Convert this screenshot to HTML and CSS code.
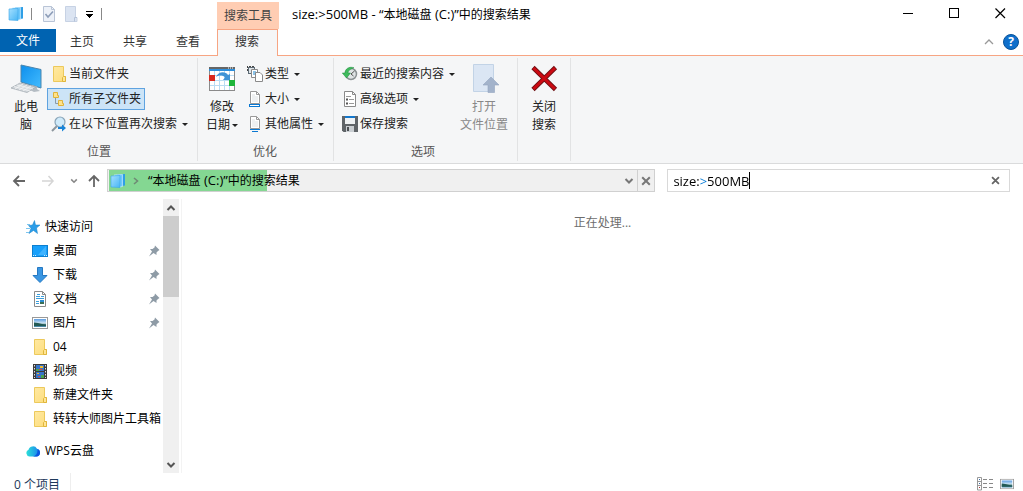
FILE: index.html
```
<!DOCTYPE html>
<html lang="zh-CN">
<head>
  <meta charset="UTF-8" />
  <title>size:&gt;500MB - “本地磁盘 (C:)”中的搜索结果</title>
  <link rel="stylesheet" href="styles.css">
</head>
<body>
<!-- shared icons -->
<svg class="defs" aria-hidden="true">
  <defs>
    <linearGradient id="gFolder" x1="0" y1="0" x2="1" y2="1"><stop offset="0" stop-color="#ffe9a2"/><stop offset="1" stop-color="#fddd7c"/></linearGradient>
    <linearGradient id="gScreen" x1="0" y1="0" x2="1" y2="1"><stop offset="0" stop-color="#0d8eec"/><stop offset="1" stop-color="#43bcff"/></linearGradient>
    <linearGradient id="gStack" x1="0" y1="0" x2="1" y2="1"><stop offset="0" stop-color="#a5e0ff"/><stop offset="1" stop-color="#47b5f5"/></linearGradient>
    <linearGradient id="gCloud" x1="0" y1="0" x2="1" y2="0"><stop offset="0" stop-color="#2be0d8"/><stop offset="1" stop-color="#1a7df0"/></linearGradient>
    <linearGradient id="gPhoto" x1="0" y1="0" x2="0" y2="1"><stop offset="0" stop-color="#5b9be0"/><stop offset=".55" stop-color="#d5eaf5"/><stop offset=".6" stop-color="#3c6f6c"/><stop offset="1" stop-color="#4d8fb5"/></linearGradient>
    <symbol id="stack" viewBox="0 0 16 16">
      <path d="M7 1.500 L15 1 V12.500 L12 13 Z" fill="#2f9fe6"/>
      <path d="M4 2 L12.500 1.500 V13.500 L10 14 Z" fill="#6ec8fb" stroke="#d8f1ff" stroke-width=".6"/>
      <path d="M1 3 L10 2.500 V14.500 L1 14 Z" fill="url(#gStack)" stroke="#3ba6ea" stroke-width=".6"/>
    </symbol>
    <symbol id="folder" viewBox="0 0 16 16">
      <path d="M2.500 .5 H12.500 V10.500 H14.500 V15.500 H2.500 Z" fill="url(#gFolder)" stroke="#ecc95c"/>
      <path d="M11.500 15.500 V11.500 L12.500 10.500 H14.500 V15.500 Z" fill="#ffe595" stroke="#e0b63c"/>
    </symbol>
    <symbol id="page" viewBox="0 0 16 16">
      <path d="M3.500 .5 H9.500 L12.500 3.500 V12.500 H3.500 Z" fill="#fff" stroke="#999"/>
      <path d="M9.500 .5 V3.500 H12.500" fill="none" stroke="#999"/>
      <path d="M5 3 H8 V5 H11 V11 H5 Z" fill="#eef0f1"/>
    </symbol>
    <symbol id="pin" viewBox="0 0 12 12">
      <path d="M7 .5 L11.500 5 L10 6 L8.500 7.500 L8.500 10 L5.500 8 L1 11.500 L4 6.500 L2 4 L4.500 4 L6.500 2.500 Z" fill="#8e9ba6"/>
    </symbol>
    <symbol id="chev" viewBox="0 0 10 10">
      <path d="M1.500 3 L5 6.500 L8.500 3" fill="none" stroke="currentColor" stroke-width="2"/>
    </symbol>
    <symbol id="cross" viewBox="0 0 10 10">
      <path d="M1.200 1.200 L8.800 8.800 M8.800 1.200 L1.200 8.800" fill="none" stroke="currentColor" stroke-width="2"/>
    </symbol>
    <symbol id="photo" viewBox="0 0 16 12">
      <rect x=".5" y=".5" width="15" height="11" fill="#fff" stroke="#999"/>
      <rect x="2" y="2" width="12" height="8" fill="url(#gPhoto)"/>
      <path d="M2 5.500 L6 6 L14 8 V9 H2 Z" fill="#235a55"/>
    </symbol>
  </defs>
</svg>

<header class="titlebar">
  <div class="quick">
    <svg class="i16"><use href="#stack"/></svg>
    <span class="bar"></span>
    <button type="button" aria-label="属性"><svg class="i16" viewBox="0 0 16 16"><path d="M2.500 .5 H10.500 L13.500 3.500 V15.500 H2.500 Z" fill="#edf1f8" stroke="#b9c4d6"/><path d="M10.500 .5 V3.500 H13.500" fill="none" stroke="#b9c4d6"/><path d="M4.500 8 L7 11 L12 5.500" fill="none" stroke="#8d9db8" stroke-width="1.600"/></svg></button>
    <button type="button" aria-label="新建文件夹"><svg class="i16" viewBox="0 0 16 16"><path d="M2.500 .5 H12.500 V11.500 H14 V15.500 H2.500 Z" fill="#dbe4f2" stroke="#c7d2e4"/><path d="M11.500 15.500 V11.500 H14" fill="none" stroke="#b4c2d8"/></svg></button>
    <button type="button" aria-label="自定义快速访问工具栏"><svg class="more" viewBox="0 0 8 8"><path d="M1 1.500 H8 M1 4.500 H8 M2 5.500 H7 M3 6.500 H6 M4 7.500 H5" stroke="#000"/></svg></button>
    <span class="bar last"></span>
  </div>
  <div class="context">搜索工具</div>
  <h1><span class="latin">size:&gt;500MB - “</span>本地磁盘<span class="latin"> (C:)”</span>中的搜索结果</h1>
  <div class="controls">
    <button type="button" aria-label="最小化"><svg viewBox="0 0 11 11"><path d="M0 5.500 H10" stroke="#000"/></svg></button>
    <button type="button" aria-label="最大化"><svg viewBox="0 0 11 11"><rect x=".5" y=".5" width="9" height="9" fill="none" stroke="#000"/></svg></button>
    <button type="button" aria-label="关闭"><svg viewBox="0 0 11 11"><path d="M.5 .5 L10 10 M10 .5 L.5 10" stroke="#000" stroke-width="1.200"/></svg></button>
  </div>
</header>

<nav class="tabs">
  <button type="button" class="file">文件</button>
  <button type="button">主页</button>
  <button type="button">共享</button>
  <button type="button">查看</button>
  <button type="button" class="active">搜索</button>
  <div class="tabs-right">
    <button type="button" aria-label="最小化功能区"><svg class="i10" viewBox="0 0 10 10"><path d="M1 7 L5 3 L9 7" fill="none" stroke="#999" stroke-width="1.300"/></svg></button>
    <button type="button" class="help" aria-label="帮助">?</button>
  </div>
</nav>

<section class="ribbon">
  <div class="group place">
    <div class="tools">
      <button type="button" class="large">
        <svg class="i32" viewBox="0 0 32 32">
          <path d="M11 1 L31 5.500 V24 L11 18 Z" fill="url(#gScreen)" stroke="#4b85ad"/>
          <path d="M22 21 L27 22.500 V25 L30 27 L24 28 L19 25.500 Z" fill="#b4bcc3"/>
          <path d="M10 19 L26 23 L17 28.500 L1 24 Z" fill="#d3d8dc" stroke="#9da6ae" stroke-width=".7"/>
          <path d="M7 21 L23 25 M4 22.500 L20 27 M13 20 L5 25 M17 21 L9 26 M21 22 L13 27" stroke="#f2f4f5" stroke-width=".8"/>
        </svg>
        <span>此电<br>脑</span>
      </button>
      <div class="col">
        <button type="button" class="small"><svg class="i16"><use href="#folder"/></svg>当前文件夹</button>
        <button type="button" class="small on"><svg class="i16" viewBox="0 0 16 16"><path d="M4.500 7 V12.500 H8" fill="none" stroke="#8a9aa8"/><path d="M2.500 1.500 H6.500 V4.500 H7.500 V6.500 H2.500 Z" fill="#ffe28a" stroke="#dfb33a"/><path d="M7.500 9.500 H11.500 V12.500 H12.500 V14.500 H7.500 Z" fill="#ffe28a" stroke="#dfb33a"/></svg>所有子文件夹</button>
        <button type="button" class="small"><svg class="i16" viewBox="0 0 16 16"><path d="M1 15 L6 10" stroke="#8c969e" stroke-width="2"/><circle cx="9" cy="6" r="5" fill="#cfeafa" stroke="#8aa5b8" stroke-width="1.200"/><path d="M7 11 H11 V8.500 L15 12 L11 15.500 V13 H7 Z" fill="#1683d8"/></svg>在以下位置再次搜索<i class="arrow"></i></button>
      </div>
    </div>
    <div class="caption">位置</div>
  </div>

  <div class="group">
    <div class="tools">
      <button type="button" class="large">
        <svg class="i32" viewBox="0 0 32 32">
          <rect x="3.500" y="3.500" width="25" height="23" fill="#fff" stroke="#8a8a8a"/>
          <rect x="3" y="3" width="26" height="2" fill="#666"/>
          <path d="M22 4 H28" stroke="#fff" stroke-dasharray="1 1"/>
          <rect x="3" y="5" width="26" height="2" fill="#2d8fdc"/>
          <path d="M4 11.500 H28 M4 16.500 H28 M4 21.500 H28 M8.500 7 V26 M13.500 7 V26 M18.500 7 V26 M23.500 7 V26" stroke="#b9dcf3"/>
          <path d="M10 13 C12 7 20 7 22 11 L24 10 V16 H17 L19 13.500 C17 11 13 11 10 13 Z" fill="#3f93d6"/>
          <rect x="3" y="11" width="6" height="6" fill="#d8281d"/>
          <rect x="23" y="16" width="6" height="6" fill="#1fb53a"/>
        </svg>
        <span>修改<br>日期<i class="arrow"></i></span>
      </button>
      <div class="col">
        <button type="button" class="small"><svg class="i16" viewBox="0 0 16 16"><path d="M.5 0 V6 M2 .5 H8" stroke="#444" stroke-dasharray="2 1"/><rect x="1.500" y="1.500" width="6" height="6" fill="#dfe5e9" stroke="#5d6b75"/><path d="M4.500 3.500 H10.500 V11.500 H4.500 Z" fill="#fff" stroke="#8a8a8a"/><rect x="6" y="5" width="3" height="4" fill="#8cc3e8"/><path d="M8.500 6.500 H13 L15.500 9 V15.500 H8.500 Z" fill="#fff" stroke="#8a8a8a"/></svg>类型<i class="arrow"></i></button>
        <button type="button" class="small"><svg class="i16" viewBox="0 0 16 16"><use href="#page" width="16" height="16"/><rect x="2.500" y="13.500" width="10" height="2" fill="#fff" stroke="#0a78d2"/></svg>大小<i class="arrow"></i></button>
        <button type="button" class="small"><svg class="i16" viewBox="0 0 16 16"><use href="#page" width="16" height="16"/><path d="M3 13.500 H13 M5 15.500 H11" stroke="#0a78d2"/></svg>其他属性<i class="arrow"></i></button>
      </div>
    </div>
    <div class="caption">优化</div>
  </div>

  <div class="group options">
    <div class="tools">
      <div class="col">
        <button type="button" class="small"><svg class="i16" viewBox="0 0 16 16"><circle cx="9" cy="8" r="5.500" fill="#dfe4e5" stroke="#8b9294" stroke-width="1.500"/><path d="M9 8 L12.500 5 M9 8 L11.500 10" stroke="#555"/><path d="M12 1.800 C7 0 3 3 3 7 H.3 L4.500 12 L8.500 7 H6 C6 4.500 8.500 3 12 1.800 Z" fill="#3fba5c" stroke="#198c3b" stroke-width=".5"/></svg>最近的搜索内容<i class="arrow"></i></button>
        <button type="button" class="small"><svg class="i16" viewBox="0 0 16 16"><path d="M2.500 .5 H10.500 L13.500 3.500 V15.500 H2.500 Z" fill="#fff" stroke="#8a8a8a"/><path d="M10.500 .5 V3.500 H13.500" fill="none" stroke="#8a8a8a"/><path d="M4 5.500 H9 M7 8.500 H12 M7 12.500 H12" stroke="#999"/><path d="M4 8.500 H6 M4 12.500 H6" stroke="#555" stroke-width="2"/></svg>高级选项<i class="arrow"></i></button>
        <button type="button" class="small"><svg class="i16" viewBox="0 0 16 16"><path d="M0 0 H16 V16 H1.500 L0 14.500 Z" fill="#5f6468"/><rect x="3" y="0" width="10" height="8" fill="#eef1f3"/><rect x="3" y="0" width="10" height="2" fill="#1377cc"/><rect x="4" y="10" width="8" height="6" fill="#c9ced2"/><rect x="5" y="11" width="2" height="4" fill="#4a4e52"/></svg>保存搜索</button>
      </div>
      <button type="button" class="large" disabled>
        <svg class="i32" viewBox="0 0 32 32">
          <path d="M5.500 .5 H25.500 V27.500 H5.500 Z" fill="#dbe6f4" stroke="#c2d3e6"/>
          <path d="M23 13 L31 21 H26.500 V28.500 H20 V21 H15 Z" fill="#a3b3cb" stroke="#93a5c0" stroke-width=".6"/>
        </svg>
        <span>打开<br>文件位置</span>
      </button>
    </div>
    <div class="caption">选项</div>
  </div>

  <div class="group close">
    <div class="tools">
      <button type="button" class="large">
        <svg class="i32" viewBox="0 0 32 32"><path d="M5 3.500 L27.500 25.500 M27.500 3.500 L5 25.500" stroke="#6d1013" stroke-width="4.600"/><path d="M5.500 4 L27 25 M27 4 L5.500 25" stroke="#cb0a12" stroke-width="3"/></svg>
        <span>关闭<br>搜索</span>
      </button>
    </div>
  </div>
</section>

<div class="navbar">
  <div class="arrows">
    <button type="button" aria-label="后退"><svg viewBox="0 0 14 14"><path d="M13 7 H2 M7 2 L2 7 L7 12" fill="none" stroke="#666" stroke-width="1.800"/></svg></button>
    <button type="button" aria-label="前进"><svg viewBox="0 0 14 14"><path d="M1 7 H12 M7.500 2 L12 7 L7.500 12" fill="none" stroke="#d5d5d5" stroke-width="1.500"/></svg></button>
    <button type="button" class="recent" aria-label="最近浏览的位置"><svg viewBox="0 0 10 10"><use href="#chev"/></svg></button>
    <button type="button" aria-label="上移"><svg viewBox="0 0 14 14"><path d="M7 13 V2 M2 7 L7 2 L12 7" fill="none" stroke="#666" stroke-width="1.800"/></svg></button>
  </div>
  <div class="address">
    <svg class="i16"><use href="#stack"/></svg>
    <svg class="crumb" viewBox="0 0 10 10"><path d="M3 2 L6.500 5 L3 8" fill="none" stroke="#6f8a75" stroke-width="1.600"/></svg>
    <span class="path"><span class="latin">“</span>本地磁盘<span class="latin"> (C:)”</span>中的搜索结果</span>
    <button type="button" class="drop" aria-label="以前的位置"><svg class="i10"><use href="#chev"/></svg></button>
    <button type="button" class="stop" aria-label="停止"><svg class="i10"><use href="#cross"/></svg></button>
  </div>
  <div class="search">
    <input type="text" class="latin" value="size:&gt;500MB" aria-label="搜索">
    <span class="caret"></span>
    <button type="button" aria-label="清除"><svg viewBox="0 0 10 10"><use href="#cross"/></svg></button>
  </div>
</div>

<div class="main">
  <aside class="tree">
    <a href="#" class="root"><svg class="i14" viewBox="0 0 14 14"><path d="M8.500 .5 L9.500 5 L14 5 L10.500 8 L11.500 13.500 L7.500 10.500 L3 13.500 L5 8.300 L2.500 5.500 L6.500 5 Z" fill="#2b9de8" stroke="#1580c8" stroke-width=".5"/><path d="M1 4.500 H4 M0 8.500 H4 M0 12.500 H3" stroke="#7cc5ee"/></svg><span>快速访问</span></a>
    <a href="#"><svg class="i16" viewBox="0 0 16 16"><rect x=".5" y="2.500" width="15" height="11" fill="#18a0fb" stroke="#0c7fd0"/><path d="M6 12 L14 3 V12 Z" fill="#3fb3ff"/><path d="M1 12.500 H15" stroke="#cfeaff" stroke-dasharray="1 1 1 8"/></svg><span>桌面</span><svg class="pin"><use href="#pin"/></svg></a>
    <a href="#"><svg class="i16" viewBox="0 0 16 16"><path d="M5.500 .5 H10.500 V8.500 H15 L8 15.500 L1 8.500 H5.500 Z" fill="#3a96e2" stroke="#2478c2"/></svg><span>下载</span><svg class="pin"><use href="#pin"/></svg></a>
    <a href="#"><svg class="i16" viewBox="0 0 16 16"><path d="M2.500 .5 H10.500 L13.500 3.500 V15.500 H2.500 Z" fill="#fff" stroke="#8a8a8a"/><path d="M10.500 .5 V3.500 H13.500" fill="none" stroke="#8a8a8a"/><path d="M5 3.500 H8 M4 5.500 H8 M9 5.500 H12 M4 7.500 H12 M4 10.500 H7 M4 12.500 H7" stroke="#3c9edb"/><rect x="8" y="9" width="4" height="2" fill="#2b8bd0"/><rect x="8" y="11" width="4" height="2" fill="#3a6e54"/></svg><span>文档</span><svg class="pin"><use href="#pin"/></svg></a>
    <a href="#"><svg class="i16"><use href="#photo"/></svg><span>图片</span><svg class="pin"><use href="#pin"/></svg></a>
    <a href="#"><svg class="i16"><use href="#folder"/></svg><span>04</span></a>
    <a href="#"><svg class="i16" viewBox="0 0 16 16"><rect x="1" y="1" width="14" height="15" fill="#3c3c3c"/><path d="M2.500 2 V15 M13.500 2 V15" stroke="#e2e2e2" stroke-dasharray="1.500 1.500"/><rect x="4" y="2" width="8" height="6" fill="#3774c8"/><rect x="4" y="9" width="8" height="6" fill="#3774c8"/><path d="M8 3 H11 V5 H8 Z M5 10 H7 V11 H5 Z" fill="#f0b92c"/><path d="M4 6 H7 V8 H4 Z M9 12 H12 V15 H9 Z" fill="#4ca54e"/><path d="M7 6 H10 V7 H7 Z M6 13 H8 V14 H6 Z" fill="#d84a3a"/></svg><span>视频</span></a>
    <a href="#"><svg class="i16"><use href="#folder"/></svg><span>新建文件夹</span></a>
    <a href="#"><svg class="i16"><use href="#folder"/></svg><span>转转大师图片工具箱</span></a>
    <a href="#" class="root wps"><svg class="i14" viewBox="0 0 14 14"><path d="M3.500 12.500 A3.500 3.500 0 0 1 2.500 5.800 A4.600 4.600 0 0 1 11 4.800 A3.900 3.900 0 0 1 10.500 12.500 Z" fill="url(#gCloud)"/><path d="M7 12.500 C10 12 12 9 11.500 5 A3.900 3.900 0 0 1 10.500 12.500 Z" fill="#0b55e0"/></svg><span>WPS云盘</span></a>
  </aside>
  <div class="scroll">
    <button type="button" aria-label="向上滚动"><svg class="i10 up"><use href="#chev"/></svg></button>
    <div class="thumb"></div>
    <button type="button" aria-label="向下滚动"><svg class="i10"><use href="#chev"/></svg></button>
  </div>
  <main class="files"><p>正在处理...</p></main>
</div>

<footer class="status">
  <span class="count">0 个项目</span>
  <div class="views">
    <button type="button" aria-label="详细信息"><svg class="i16" viewBox="0 0 16 14"><path d="M.5 .5 H4.500 V13 H.5 Z M.5 4.500 H4.500 M.5 8.500 H4.500" fill="none" stroke="#999"/><path d="M6 2.500 H10 M12 2.500 H16 M6 6.500 H10 M12 6.500 H16 M6 10.500 H10 M12 10.500 H16" stroke="#888"/><path d="M2 2.500 H3 M2 6.500 H3" stroke="#3c6ea8"/><path d="M2 10.500 H3" stroke="#a33"/></svg></button>
    <button type="button" aria-label="大缩略图"><svg class="i14" viewBox="0 0 16 12"><use href="#photo" width="16" height="12"/></svg></button>
  </div>
</footer>
</body>
</html>
```
FILE: styles.css
```
* {
  margin: 0;
  padding: 0;
  box-sizing: border-box;
}
body {
  display: flex;
  flex-direction: column;
  min-height: 100vh;
  background: #fff;
  color: #000;
  font-family: "Open Sans", "Noto Sans CJK SC", sans-serif;
  font-size: 12px;
  line-height: 18px;
}
button {
  display: flex;
  align-items: center;
  justify-content: center;
  background: none;
  border: 0;
  color: inherit;
  font: inherit;
  white-space: nowrap;
}
a {
  color: inherit;
  text-decoration: none;
}
svg {
  display: block;
  flex: none;
}
.defs {
  position: absolute;
  width: 0;
  height: 0;
}
.i10 { width: 10px; height: 10px; }
.i14 { width: 14px; height: 14px; }
.i16 { width: 16px; height: 16px; }
.i32 { width: 32px; height: 32px; }

/* title bar */
.titlebar {
  display: flex;
  height: 29px;
}
.quick {
  display: flex;
  align-items: center;
  width: 217px;
  padding: 0 0 2px 8px;
}
.quick button {
  margin-right: 6px;
}
.bar {
  width: 1px;
  height: 12px;
  margin: 0 9px 0 7px;
  background: #888;
}
.bar.last {
  margin: 0 0 0 2px;
}
.more {
  width: 8px;
  height: 8px;
}
.context {
  width: 62px;
  margin-top: 2px;
  background: #ffcdb3;
  color: #444;
  line-height: 27px;
  text-align: center;
}
h1 {
  flex: 1;
  padding-left: 13px;
  font-size: 12px;
  font-weight: normal;
  line-height: 28px;
}
.latin {
  font-size: 13px;
}
.controls {
  display: flex;
}
.controls button {
  width: 46px;
  height: 27px;
}
.controls svg {
  width: 11px;
  height: 11px;
}

/* tabs */
.tabs {
  display: flex;
  height: 27px;
  border-bottom: 1px solid #f7a583;
  color: #333;
}
.tabs > button {
  height: 25px;
  padding: 0 14px;
  margin-right: 1px;
}
.tabs .file {
  height: 23px;
  padding: 0 16px;
  margin: 0;
  background: #0063b1;
  color: #fff;
}
.tabs .active {
  height: 27px;
  margin-left: 2px;
  padding: 0 18px 2px 17px;
  background: #f5f6f7;
  border: 1px solid #f7a583;
  border-bottom: 0;
}
.tabs-right {
  display: flex;
  align-items: center;
  gap: 9px;
  margin-left: auto;
  padding-right: 4px;
}
.tabs .help {
  width: 16px;
  height: 16px;
  border: 1px solid #0a5399;
  border-radius: 50%;
  background: #0f6fcb;
  color: #fff;
  font-weight: bold;
  line-height: 14px;
}

/* ribbon */
.ribbon {
  display: flex;
  height: 108px;
  padding-top: 2px;
  background: #f5f6f7;
  border-bottom: 1px solid #dadbdc;
  color: #222;
}
.group {
  display: flex;
  flex-direction: column;
  height: 103px;
  padding: 5px 5px 0 4px;
  border-right: 1px solid #e2e3e4;
}
.place {
  padding-left: 6px;
}
.options {
  padding-right: 9px;
}
.close {
  padding: 5px 6px 0;
}
.tools {
  display: flex;
  flex: 1;
  gap: 1px;
}
.caption {
  color: #555;
  text-align: center;
  line-height: 18px;
}
.col {
  display: flex;
  flex-direction: column;
  align-items: flex-start;
  gap: 3px;
}
.small {
  gap: 2px;
  height: 22px;
  padding: 0 3px;
  border: 1px solid transparent;
}
.small.on {
  background: #cce4f7;
  border-color: #5fa3e0;
}
.large {
  flex-direction: column;
  justify-content: flex-start;
  gap: 2px;
  min-width: 40px;
  padding-top: 1px;
  line-height: 18px;
}
.large:disabled {
  color: #888;
}
.arrow {
  display: inline-block;
  margin-left: 3px;
  border: 3px solid transparent;
  border-top-color: #222;
  border-bottom: 0;
  vertical-align: middle;
}
.large .arrow {
  margin-left: 2px;
}

/* navigation bar */
.navbar {
  display: flex;
  height: 35px;
  padding: 5px 13px 7px 0;
}
.arrows {
  display: flex;
  align-items: center;
  gap: 15px;
  padding: 0 6px 0 12px;
}
.arrows svg {
  width: 14px;
  height: 14px;
}
.arrows .recent {
  width: 8px;
  margin-right: -6px;
  color: #888;
}
.arrows .recent svg {
  width: 8px;
  height: 8px;
}
.address {
  display: flex;
  flex: 5;
  align-items: center;
  padding-left: 2px;
  background: linear-gradient(#84d792, #84d792) no-repeat 1px 0 / 29% 100% #f0f0f0;
  border: 1px solid #d0d0d0;
}
.crumb {
  width: 10px;
  height: 10px;
  margin: 0 7px 0 5px;
}
.path {
  flex: 1;
}
.address button {
  width: 17px;
  height: 21px;
  color: #777;
}
.address .stop {
  border-left: 1px solid #d0d0d0;
}
.search {
  display: flex;
  flex: 3;
  align-items: center;
  margin-left: 12px;
  padding: 0 9px 0 5px;
  border: 1px solid #d9d9d9;
}
.search input {
  width: 76px;
  border: 0;
  outline: 0;
  /* operator is tinted, the rest of the query is black */
  background: linear-gradient(90deg, #000 27px, #0078d7 27px, #0078d7 35px, #000 35px);
  -webkit-background-clip: text;
  background-clip: text;
  color: transparent;
  font-family: inherit;
}
.caret {
  width: 1px;
  height: 17px;
  background: #000;
}
.search button {
  margin-left: auto;
  color: #666;
}
.search button svg {
  width: 9px;
  height: 9px;
}

/* folder tree and file list */
.main {
  display: flex;
  flex: 1;
}
.tree {
  width: 163px;
  padding-top: 16px;
}
.tree a {
  display: flex;
  align-items: center;
  gap: 5px;
  height: 24px;
  padding-left: 32px;
  white-space: nowrap;
}
.tree .root {
  padding-left: 26px;
}
.tree .wps {
  margin-top: 8px;
}
.tree .pin {
  width: 12px;
  height: 12px;
  margin: 0 3px 0 auto;
}
.scroll {
  display: flex;
  flex-direction: column;
  width: 16px;
  background: #f0f0f0;
  color: #555;
}
.scroll button {
  height: 17px;
}
.scroll .up {
  transform: rotate(180deg);
}
.thumb {
  height: 81px;
  margin-bottom: auto;
  background: #cdcdcd;
}
.files {
  flex: 1;
  margin-left: 2px;
  padding-top: 15px;
  border-left: 1px solid #f3f3f3;
  color: #6d6d6d;
  text-align: center;
}

/* status bar */
.status {
  display: flex;
  height: 18px;
  padding: 0 9px 0 14px;
  color: #1e395b;
  line-height: 24px;
}
.count {
  padding-right: 10px;
  border-right: 1px solid #eee;
}
.views {
  display: flex;
  align-items: center;
  gap: 7px;
  margin-left: auto;
  padding-top: 3px;
}
```
